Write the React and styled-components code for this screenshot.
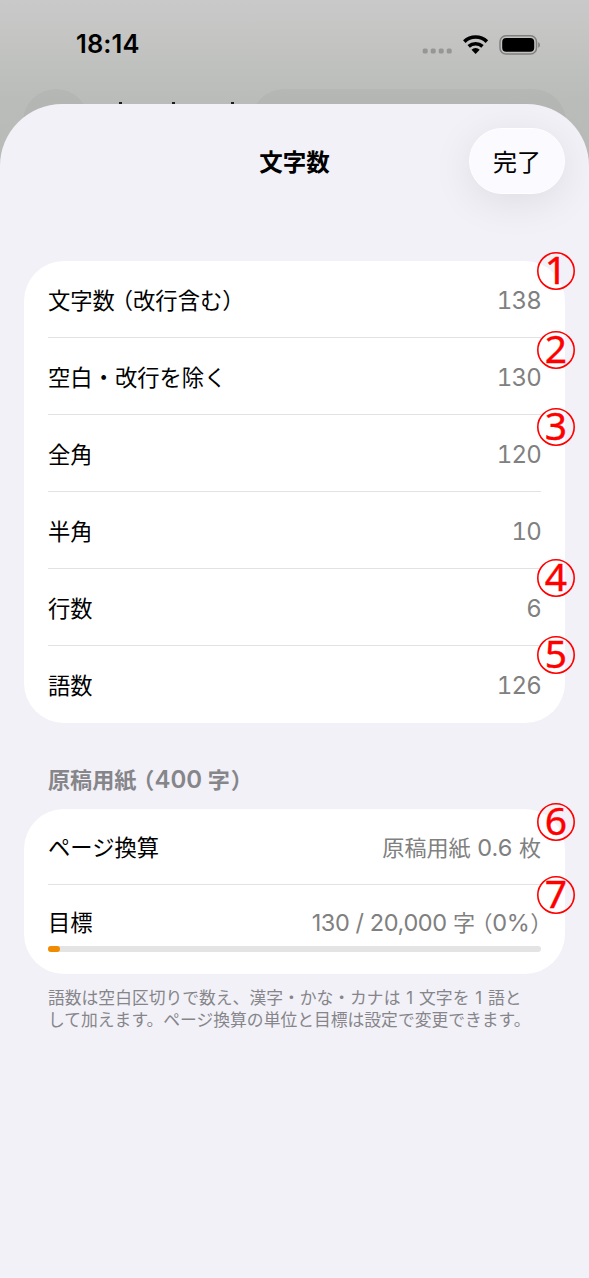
import styled, { createGlobalStyle } from "styled-components";

const GlobalStyle = createGlobalStyle`
  * {
    box-sizing: border-box;
  }

  body {
    margin: 0;
    background-color: #f2f1f7;
    font-family: Inter, "Noto Sans CJK JP", sans-serif;
    color: black;
  }
`;

const Screen = styled.div`
  height: 1278px;
  display: flex;
  flex-direction: column;
  overflow: hidden;
`;

const Backdrop = styled.div`
  height: 190px;
  flex-shrink: 0;
  background: linear-gradient(#c9c9c9, #c3c4c2 45px, #b9bcb8 100px, #b7bab6);
`;

const StatusBar = styled.div`
  height: 89px;
  padding: 0 49px 0 76px;
  display: flex;
  align-items: center;
  justify-content: space-between;
`;

const Time = styled.div`
  padding-bottom: 1px;
  font-size: 25.5px;
  font-weight: 600;
  line-height: 30px;
  letter-spacing: 0.1px;
`;

const BackdropNav = styled.div`
  display: flex;
  padding-left: 23px;
`;

const NavShape = styled.div`
  width: ${(props) => props.$width}px;
  height: 66px;
  border-radius: 33px;
  background-color: rgba(0, 0, 0, 0.03);
`;

const NavTitle = styled.div`
  display: flex;
  justify-content: space-between;
  width: 115px;
  margin: 0 17px 0 30px;
  padding-top: 13px;

  i {
    width: 3px;
    height: 8px;
    background-color: #1c1c1c;
  }

  i:nth-child(2) {
    margin-right: 7px;
  }
`;

const Sheet = styled.main`
  position: relative;
  flex: 1;
  margin-top: -86px;
  padding: 24px 24px 0;
  border-radius: 62px 62px 0 0;
  background-color: #f2f1f7;
`;

const Header = styled.header`
  display: grid;
  grid-template-columns: 1fr auto 1fr;
  align-items: center;
  height: 66px;
  margin-bottom: 67px;

  h1 {
    grid-column: 2;
    margin: 0;
    padding-top: 4px;
    font-size: 23.5px;
    font-weight: 700;
    line-height: 32px;
  }
`;

const DoneButton = styled.button`
  justify-self: end;
  width: 96px;
  height: 66px;
  padding: 0 0 1px;
  border: 1px solid white;
  border-radius: 33px;
  background-color: #fafaff;
  box-shadow: 0 8px 42px rgba(0, 0, 0, 0.085);
  color: black;
  font: inherit;
  font-size: 24px;
`;

const Card = styled.section`
  border-radius: 40px;
  background-color: white;
  padding: 0 24px;
`;

const Row = styled.div`
  position: relative;
  height: ${(props) => props.$height || 77}px;
  padding-top: ${(props) => props.$top || 24}px;
  border-bottom: ${(props) => (props.$last ? "none" : "1px solid #e2e2e2")};
`;

const Line = styled.div`
  display: flex;
  justify-content: space-between;
  line-height: 32px;
  white-space: nowrap;
`;

const Label = styled.span`
  font-size: 22.3px;
`;

const Value = styled.span`
  color: #808080;
  font-size: ${(props) => (props.$tabular ? 24 : 23.5)}px;
  font-variant-numeric: ${(props) =>
    props.$tabular ? "tabular-nums" : "normal"};
  letter-spacing: ${(props) => props.$spacing || 0}px;

  small {
    font-size: 22.1px;
  }
`;

// brackets are half-width, with their own side spacing
const Open = styled.span`
  margin-left: 7px;
  font-feature-settings: "halt";
`;

const Close = styled.span`
  margin-left: ${(props) => props.$gap || 0}px;
  font-feature-settings: "halt";
`;

const MarkerBox = styled.span`
  position: absolute;
  right: -34px;
  top: ${(props) => props.$top}px;
  display: grid;
  width: 38px;
  height: 38px;
  color: #f00;
  font-family: "Noto Sans", "Open Sans", sans-serif;
  font-size: 39px;
  line-height: 33px;
  text-align: center;
  -webkit-text-stroke: 0.4px #f00;

  > * {
    grid-area: 1 / 1;
  }
`;

const SectionTitle = styled.h2`
  margin: 41px 24px 13px;
  color: #85858a;
  font-size: 22.1px;
  font-weight: 600;
  line-height: 32px;

  b {
    font-size: 24px;
    font-weight: 600;
  }
`;

const Track = styled.div`
  height: 6px;
  margin-top: 7px;
  border-radius: 3px;
  background-color: #e4e4e4;
`;

const Progress = styled.div`
  width: 12px;
  height: 6px;
  border-radius: 3px;
  background-color: #f08b00;
`;

const Note = styled.p`
  margin: 14px 24px 0;
  color: #85858a;
  font-size: 16.8px;
  line-height: 21.5px;
  word-spacing: 1.2px;
  white-space: nowrap;
`;

const Marker = ({ number, top }) => (
  <MarkerBox $top={top}>
    <svg width="38" height="38" fill="none">
      <circle cx="19" cy="19" r="18.2" stroke="currentColor" strokeWidth="1.6" />
    </svg>
    <span>{number}</span>
  </MarkerBox>
);

const StatusIcons = () => (
  <svg width="118" height="20" viewBox="422 34 118 20" fill="none">
    <g fill="#969795">
      <rect x="422.7" y="47.5" width="5" height="5" rx="1.6" />
      <rect x="430.7" y="47.5" width="5" height="5" rx="1.6" />
      <rect x="438.7" y="47.5" width="5" height="5" rx="1.6" />
      <rect x="446.7" y="47.5" width="5" height="5" rx="1.6" />
    </g>
    <path
      d="M464.3 40.6a16.2 16.2 0 0 1 22.6 0M468.7 45.3a10.4 10.4 0 0 1 13.8 0"
      stroke="#000"
      strokeWidth="3.6"
    />
    <path d="M471.5 48.7a6 6 0 0 1 8.2 0l-4.1 4.2z" fill="#000" />
    <rect
      x="500"
      y="34.8"
      width="36.5"
      height="18.2"
      rx="6"
      stroke="#80817f"
      strokeWidth="1.5"
    />
    <rect x="502.2" y="37" width="32" height="13.8" rx="4" fill="#000" />
    <path d="M538.2 41v5.8q1.8-.8 1.8-2.9t-1.8-2.9z" fill="#80817f" />
  </svg>
);

const counts = [
  {
    label: (
      <>
        文字数<Open>（</Open>改行含む<Close>）</Close>
      </>
    ),
    value: 138,
    marker: 1,
    top: -9,
  },
  { label: "空白・改行を除く", value: 130, marker: 2, top: -7 },
  { label: "全角", value: 120, marker: 3, top: -7 },
  { label: "半角", value: 10 },
  { label: "行数", value: 6, marker: 4, top: -10 },
  { label: "語数", value: 126, marker: 5, top: -10 },
];

const App = () => {
  return (
    <>
      <GlobalStyle />
      <Screen>
        <Backdrop>
          <StatusBar>
            <Time>18:14</Time>
            <StatusIcons />
          </StatusBar>
          <BackdropNav>
            <NavShape $width={66} />
            <NavTitle>
              <i />
              <i />
              <i />
            </NavTitle>
            <NavShape $width={315} />
          </BackdropNav>
        </Backdrop>
        <Sheet>
          <Header>
            <h1>文字数</h1>
            <DoneButton>完了</DoneButton>
          </Header>
          <Card>
            {counts.map((item, index) => (
              <Row key={item.value} $last={index === counts.length - 1}>
                <Line>
                  <Label>{item.label}</Label>
                  <Value $tabular $spacing={-0.8}>
                    {item.value}
                  </Value>
                </Line>
                {item.marker && <Marker number={item.marker} top={item.top} />}
              </Row>
            ))}
          </Card>
          <SectionTitle>
            原稿用紙<Open>（</Open>
            <b>400</b> 字<Close $gap={1}>）</Close>
          </SectionTitle>
          <Card>
            <Row $height={76} $top={23}>
              <Line>
                <Label>ページ換算</Label>
                <Value>
                  <small>原稿用紙</small> 0.6 <small>枚</small>
                </Value>
              </Line>
              <Marker number={6} top={-6} />
            </Row>
            <Row $height={89} $top={22} $last>
              <Line>
                <Label>目標</Label>
                <Value $spacing={-0.4}>
                  130 / 20,000 <small>字</small>
                  <small>
                    <Open>（</Open>
                  </small>
                  0%
                  <small>
                    <Close $gap={1}>）</Close>
                  </small>
                </Value>
              </Line>
              <Track>
                <Progress />
              </Track>
              <Marker number={7} top={-9} />
            </Row>
          </Card>
          <Note>
            語数は空白区切りで数え、漢字・かな・カナは 1 文字を 1 語と
            <br />
            して加えます。ページ換算の単位と目標は設定で変更できます。
          </Note>
        </Sheet>
      </Screen>
    </>
  );
};

export default App;
